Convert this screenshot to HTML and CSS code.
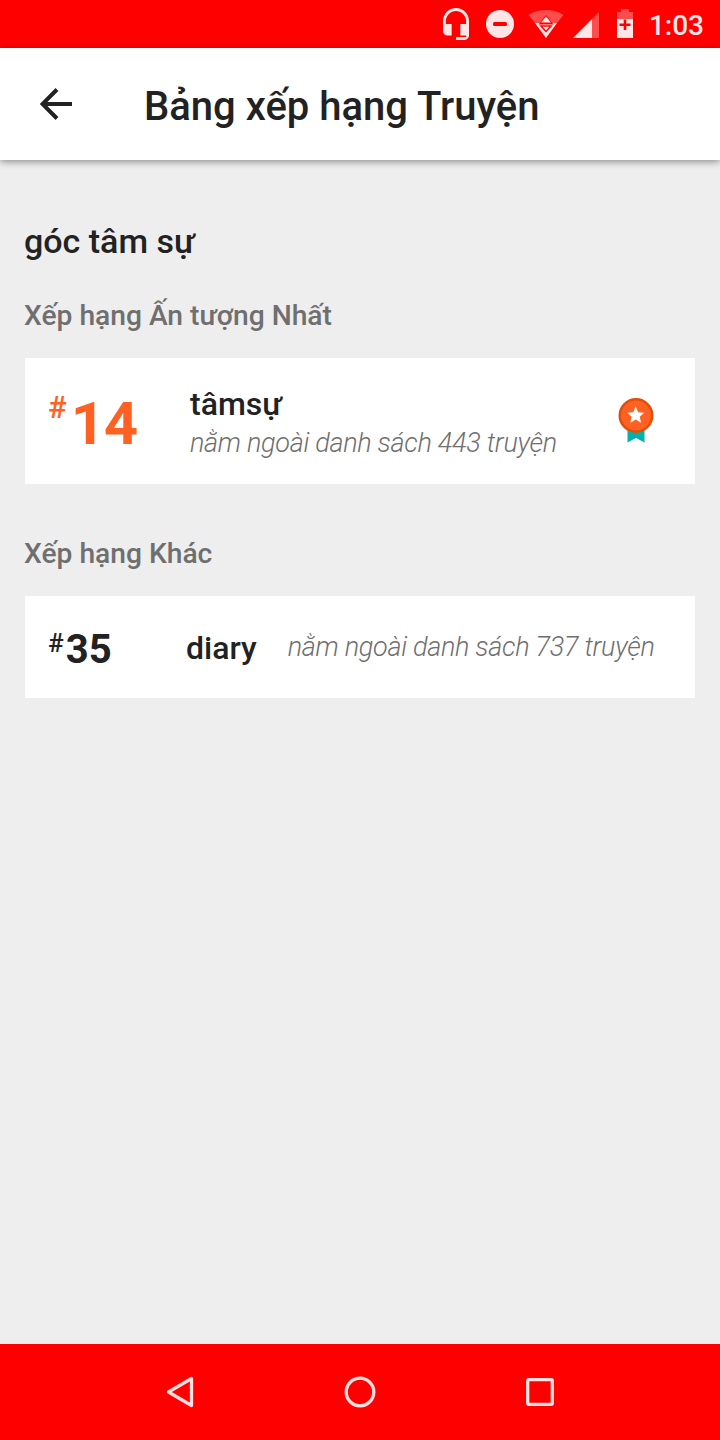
FILE: index.html
```html
<!DOCTYPE html>
<html lang="vi">
  <head>
    <meta charset="utf-8" />
    <title>Bảng xếp hạng Truyện</title>
    <link rel="stylesheet" href="styles.css">
  </head>
  <body>
    <!-- status bar -->
    <div class="status-bar">
      <svg class="headset" viewBox="3 1 18 22"><path d="M12 1c-4.970 0-9 4.030-9 9v7c0 1.660 1.340 3 3 3h3v-8H5v-2c0-3.870 3.130-7 7-7s7 3.130 7 7v2h-4v8h4v1h-7v2h6c1.660 0 3-1.340 3-3V10c0-4.970-4.030-9-9-9z"/></svg>
      <svg class="dnd" viewBox="0 0 28 28"><circle cx="14" cy="14" r="14"/><rect class="red" x="7" y="12" width="14" height="4" rx="1.500"/></svg>
      <svg class="wifi" viewBox="0 0 36 30">
        <path class="faded" d="M0.500 5Q8 0 18 0T35.500 5L29 13H7Z"/>
        <path d="M7 13H29L18 28Z"/>
        <path class="red" d="M10.500 14.500L18 5L25.500 14.500Z"/>
        <path d="M13 12.500L18 6.500L23 12.500Z"/>
        <path class="line" d="M13 16H23L18 21.500Z"/>
      </svg>
      <svg class="signal" viewBox="0 0 26 26"><path class="faded" d="M19 7L26 0V26H19Z"/><path d="M0 26L19 7V26Z"/></svg>
      <svg class="battery" viewBox="0 0 16 29"><path class="faded" d="M0 3H4V0H12V3H16V10H0Z"/><path d="M0 10H16V29H0Z"/><path class="red" d="M6.700 10.500H9.300V14.500H13.500V17H9.300V21H6.700V17H2.500V14.500H6.700Z"/></svg>
      <span class="clock">1:03</span>
    </div>

    <!-- header -->
    <div class="header">
      <svg class="back" viewBox="0 0 32 32"><path d="M32 16H3M17 1.500L2.500 16L17 30.500"/></svg>
      <h1>Bảng xếp hạng Truyện</h1>
    </div>

    <!-- content -->
    <div class="content">
      <h2>góc tâm sự</h2>
      <h3>Xếp hạng Ấn tượng Nhất</h3>
      <div class="card card-top">
        <div class="rank rank-top"><span class="hash">#</span><span class="num">14</span></div>
        <div class="info">
          <div class="tag">tâmsự</div>
          <div class="desc">nằm ngoài danh sách 443 truyện</div>
        </div>
        <svg class="medal" viewBox="0 0 36 45">
          <path fill="#00b2a9" d="M9.500 30H26.500V44.500L18 40L9.500 44.500Z"/>
          <circle cx="18" cy="17.500" r="16.250" fill="#ff6122" stroke="#e04e0c" stroke-width="2.500"/>
          <path fill="#fff" d="M17.700 8.500L20.200 14.200L26.300 14.800L21.700 18.800L23.100 24.800L17.700 21.600L12.300 24.800L13.700 18.800L9.100 14.800L15.200 14.200Z"/>
        </svg>
      </div>
      <h3 class="other">Xếp hạng Khác</h3>
      <div class="card card-other">
        <div class="rank"><span class="hash">#</span><span class="num">35</span></div>
        <div class="tag">diary</div>
        <div class="desc">nằm ngoài danh sách 737 truyện</div>
      </div>
    </div>

    <!-- navigation bar -->
    <div class="nav-bar">
      <svg viewBox="0 0 32 32"><path d="M4.500 16L27.500 2.500V29.500Z"/></svg>
      <svg viewBox="0 0 32 32"><circle cx="16" cy="16" r="13.800"/></svg>
      <svg viewBox="0 0 32 32"><rect x="3.700" y="3.700" width="24.600" height="24.600" rx="1"/></svg>
    </div>
  </body>
</html>
```

FILE: styles.css
```css
body {
  margin: 0;
  height: 1440px;
  display: flex;
  flex-direction: column;
  background: #eee;
  color: #222;
  font-family: Roboto, sans-serif;
}
h1, h2, h3 {
  margin: 0;
  font-weight: 500;
}
svg {
  display: block;
  flex: none;
}

/* status bar */
.status-bar {
  height: 48px;
  display: flex;
  align-items: center;
  justify-content: flex-end;
  box-sizing: border-box;
  padding-right: 16px;
  background: #f00;
  fill: #ffe5e5;
}
.headset {
  width: 26px;
  height: 32px;
  margin-right: 17px;
}
.dnd {
  width: 28px;
  height: 28px;
  margin-right: 14px;
}
.wifi {
  width: 36px;
  height: 30px;
  margin-top: 2px;
  margin-right: 9px;
}
.signal {
  width: 26px;
  height: 26px;
  margin: 2px 18px 0 0;
}
.battery {
  width: 16px;
  height: 29px;
  margin-top: -1px;
  margin-right: 16px;
}
.faded {
  fill: #ff4c4c;
}
.red {
  fill: #f00;
}
.line {
  fill: none;
  stroke: #f00;
  stroke-width: 1.5;
}
.clock {
  font-size: 28px;
  font-weight: 500;
  line-height: 48px;
  padding-top: 3px;
  color: #ffe5e5;
}

/* header */
.header {
  height: 112px;
  display: flex;
  align-items: center;
  box-sizing: border-box;
  padding-left: 40px;
  background: #fff;
  box-shadow: 0 2px 7px rgba(0, 0, 0, 0.4);
}
.back {
  width: 32px;
  height: 32px;
  margin-right: 72px;
  fill: none;
  stroke: #222;
  stroke-width: 4;
}
h1 {
  font-size: 40px;
  padding-top: 4px;
}

/* content */
.content {
  flex: 1;
  padding: 60px 25px 0;
}
h2 {
  height: 77px;
  margin-left: -1px;
  font-size: 34px;
  line-height: 42px;
}
h3 {
  height: 61px;
  margin-left: -1px;
  color: #6f6f6f;
  font-size: 28.2px;
  line-height: 38px;
}
.other {
  margin-top: 51px;
}
.card {
  display: flex;
  align-items: center;
  box-sizing: border-box;
  padding: 0 41px 0 23px;
  background: #fff;
}
.card-top {
  height: 126px;
}
.card-other {
  height: 102px;
}
.rank {
  width: 138px;
  flex: none;
  display: flex;
  align-items: flex-start;
  padding-top: 5px;
  font-size: 40px;
  font-weight: 700;
  line-height: 48px;
}
.hash {
  font-size: 26px;
  font-weight: 500;
  line-height: 35px;
  margin-right: 2px;
}
.rank-top {
  width: 142px;
  padding-top: 6px;
  color: #ff6122;
  font-size: 60px;
  line-height: 70px;
}
.rank-top .hash {
  font-size: 31px;
  line-height: 38px;
  margin-right: 4px;
}
.rank-top .num {
  letter-spacing: -1.5px;
}
.info {
  flex: 1;
  padding-top: 6px;
}
.tag {
  font-size: 32px;
  font-weight: 500;
  line-height: 38px;
}
.desc {
  color: #6f6f6f;
  font-size: 27px;
  font-style: italic;
  font-weight: 300;
  letter-spacing: -0.3px;
  line-height: 40px;
  white-space: nowrap;
}
.card-other .tag {
  padding-top: 2px;
}
.card-other .desc {
  margin-left: 31px;
}
.medal {
  width: 36px;
  height: 45px;
  margin-bottom: 2px;
}

/* navigation bar */
.nav-bar {
  height: 96px;
  display: flex;
  align-items: center;
  justify-content: center;
  gap: 148px;
  background: #f00;
}
.nav-bar svg {
  width: 32px;
  height: 32px;
  fill: none;
  stroke: #ffdede;
  stroke-width: 3.3;
  stroke-linejoin: round;
}
```
